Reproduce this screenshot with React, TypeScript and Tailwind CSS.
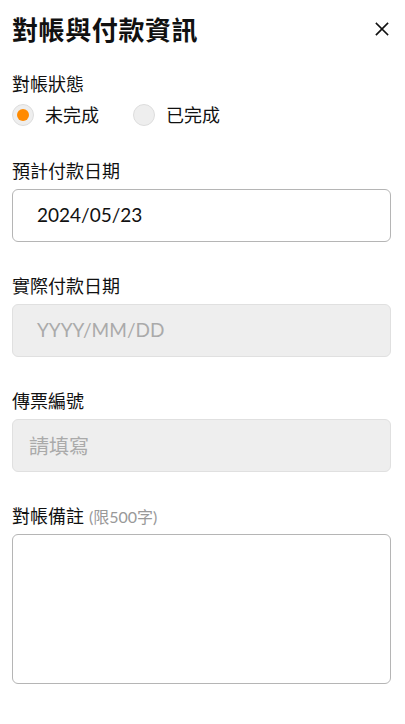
import React from "react";

const font = { fontFamily: "Lato, 'Noto Sans CJK TC', sans-serif" };

function Label({ children, extra }: { children: React.ReactNode; extra?: string }) {
  return (
    <div className="flex items-baseline h-6 text-[18px] leading-6 text-[#111]">
      <span>{children}</span>
      {extra && <span className="ml-[5px] text-[16px] text-[#999]">{extra}</span>}
    </div>
  );
}

function Radio({ checked, label }: { checked: boolean; label: string }) {
  return (
    <div className="flex items-center">
      <div className="w-[22px] h-[22px] rounded-full bg-[#eeeeee] border border-[#dddddd] flex items-center justify-center">
        {checked && <div className="w-3 h-3 rounded-full bg-[#ff8a00]" />}
      </div>
      <span className="ml-[11px] text-[18px] leading-6 text-[#111]">{label}</span>
    </div>
  );
}

export default function App() {
  return (
    <div className="w-[405px] h-[724px] bg-white pl-3 pr-[14px] text-[#111]" style={font}>
      <div className="flex items-center justify-between h-[58px] pt-[1px]">
        <h1 className="text-[26px] font-bold leading-8 tracking-[0.6px]">對帳與付款資訊</h1>
        <svg width="14" height="14" viewBox="0 0 14 14" className="mr-[2px] mt-[-2px]">
          <path d="M1.5 1.5 L12.5 12.5 M12.5 1.5 L1.5 12.5" stroke="#111" strokeWidth="1.7" strokeLinecap="square" />
        </svg>
      </div>

      <div className="mt-[14px]">
        <Label>對帳狀態</Label>
        <div className="flex items-center gap-[34px] mt-[7px]">
          <Radio checked label="未完成" />
          <Radio checked={false} label="已完成" />
        </div>
      </div>

      <div className="mt-[32px]">
        <Label>預計付款日期</Label>
        <div className="mt-[6px] h-[53px] rounded-[6px] border border-[#b5b5b5] flex items-center pl-6 text-[19px] text-[#111]">
          2024/05/23
        </div>
      </div>

      <div className="mt-[32px]">
        <Label>實際付款日期</Label>
        <div className="mt-[6px] h-[53px] rounded-[6px] border border-[#e0e0e0] bg-[#eeeeee] flex items-center pl-6 text-[19px] text-[#aaaaaa]">
          YYYY/MM/DD
        </div>
      </div>

      <div className="mt-[32px]">
        <Label>傳票編號</Label>
        <div className="mt-[6px] h-[53px] rounded-[6px] border border-[#e0e0e0] bg-[#eeeeee] flex items-center pl-4 text-[20px] text-[#aaaaaa]">
          請填寫
        </div>
      </div>

      <div className="mt-[32px]">
        <Label extra="(限500字)">對帳備註</Label>
        <div className="mt-[6px] h-[150px] rounded-[6px] border border-[#b5b5b5]" />
      </div>
    </div>
  );
}
